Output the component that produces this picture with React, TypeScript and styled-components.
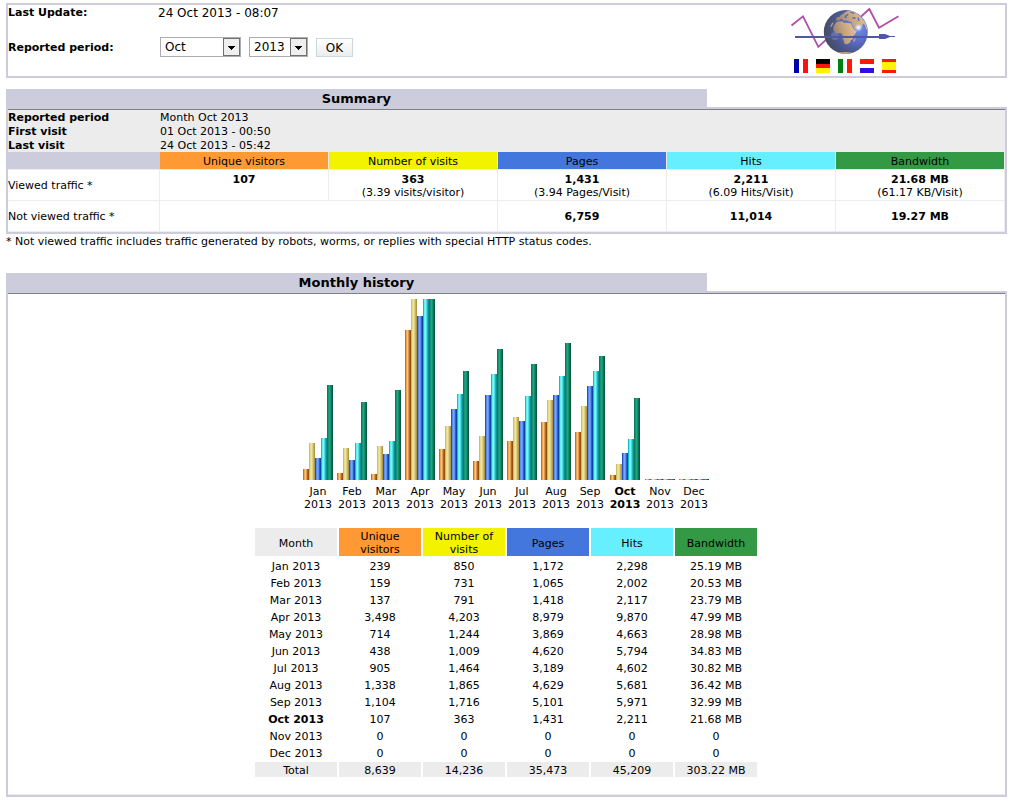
import React from "react";
import styled, { createGlobalStyle } from "styled-components";

const lavender = "#ccccdd";
const pale = "#ececec";

const metrics = [
  { key: "visitors", label: "Unique visitors", color: "#ff9933", bar: ["#c4761d", "#f0a850", "#fac482", "#dd9a50", "#b06a20", "#944f0c"] },
  { key: "visits", label: "Number of visits", color: "#f3f300", bar: ["#cdbf62", "#e6dc8c", "#eee49c", "#ddd084", "#c4b364", "#ac9848"] },
  { key: "pages", label: "Pages", color: "#4477dd", bar: ["#1f55c0", "#5a8cf0", "#7aa4fa", "#6090f0", "#2c60c8", "#1044a4"] },
  { key: "hits", label: "Hits", color: "#66f0ff", bar: ["#10c0c4", "#62f0f2", "#7af8f8", "#50dce0", "#20b4b8", "#0a9094"] },
  { key: "bandwidth", label: "Bandwidth", color: "#339944", bar: ["#0c7c5c", "#149474", "#20a486", "#129070", "#0a7454", "#065a3e"] },
];

const months: { name: string; values: number[] }[] = [
  { name: "Jan", values: [239, 850, 1172, 2298, 25.19] },
  { name: "Feb", values: [159, 731, 1065, 2002, 20.53] },
  { name: "Mar", values: [137, 791, 1418, 2117, 23.79] },
  { name: "Apr", values: [3498, 4203, 8979, 9870, 47.99] },
  { name: "May", values: [714, 1244, 3869, 4663, 28.98] },
  { name: "Jun", values: [438, 1009, 4620, 5794, 34.83] },
  { name: "Jul", values: [905, 1464, 3189, 4602, 30.82] },
  { name: "Aug", values: [1338, 1865, 4629, 5681, 36.42] },
  { name: "Sep", values: [1104, 1716, 5101, 5971, 32.99] },
  { name: "Oct", values: [107, 363, 1431, 2211, 21.68] },
  { name: "Nov", values: [0, 0, 0, 0, 0] },
  { name: "Dec", values: [0, 0, 0, 0, 0] },
];
const currentMonth = "Oct";
const totals = ["8,639", "14,236", "35,473", "45,209", "303.22 MB"];
// Visitors and visits share one scale, pages and hits another.
const maxima = [4203, 4203, 9870, 9870, 47.99];

const barHeight = (value: number, i: number) => Math.floor((value * 180) / maxima[i]) + 1;
const format = (value: number, i: number) =>
  i === 4 && value > 0 ? `${value.toFixed(2)} MB` : value.toLocaleString("en-US");

const GlobalStyle = createGlobalStyle`
  * { box-sizing: border-box; }
  body {
    margin: 0;
    background: #fff;
    color: #000;
    font: 11px/14px Verdana, "DejaVu Sans", sans-serif;
  }
  table { border-collapse: separate; border-spacing: 0; }
  td, th { padding: 0; }
`;

const Page = styled.main`
  padding: 3px 7px 13px 6px;
`;

const Header = styled.header`
  display: flex;
  min-height: 75px;
  border: 2px solid ${lavender};
`;

const Form = styled.form`
  flex: 1;
  display: grid;
  grid-template-columns: 150px 1fr;
  grid-template-rows: 14px 20px;
  row-gap: 18px;
  align-items: center;
`;

const FieldName = styled.label`
  padding-top: 2px;
  font-weight: bold;
`;

const Updated = styled.span`
  padding-top: 2px;
  font-size: 12px;
`;

const Controls = styled.div`
  display: flex;
  align-items: center;
  padding-left: 2px;
`;

const SelectBox = styled.span<{ $width: number }>`
  position: relative;
  width: ${(p) => p.$width}px;
  height: 20px;
  margin-right: 8px;
`;

const Select = styled.select`
  appearance: none;
  width: 100%;
  height: 20px;
  padding: 1px 0 0 4px;
  border: 1px solid #abadb3;
  border-radius: 0;
  background: #fff;
  color: #000;
  font: 12px/17px Verdana, "DejaVu Sans", sans-serif;
`;

const DropMark = styled.svg`
  position: absolute;
  top: 1px;
  right: 1px;
  pointer-events: none;
`;

const SubmitButton = styled.button`
  width: 37px;
  height: 19px;
  padding: 1px 0 0;
  border: 1px solid #ccd7e2;
  background: linear-gradient(#fff, #ececec);
  color: #000;
  font: 12px/16px Verdana, "DejaVu Sans", sans-serif;
`;

const Brand = styled.div`
  width: 219px;
`;

const GlobeArt = styled.svg`
  display: block;
`;

const Flags = styled.nav`
  display: flex;
  gap: 8px;
  padding-left: 8px;
`;

const FlagLink = styled.a`
  display: block;
  width: 14px;
  height: 14px;
`;

const Section = styled.section<{ $gap: number }>`
  margin-top: ${(p) => p.$gap}px;
`;

const Title = styled.h2`
  width: 70%;
  height: 18px;
  margin: 0;
  background: ${lavender};
  font-size: 13px;
  line-height: 19px;
  text-align: center;
`;

const Panel = styled.div`
  border: 2px solid ${lavender};
`;

const SummaryTable = styled.table`
  width: 100%;
  table-layout: fixed;
  border-top: 1px solid #808080;
`;

const InfoRow = styled.tr`
  height: 14px;
  background: ${pale};
  line-height: 12px;
  text-align: left;

  th, td { padding-top: 2px; }
`;

const HeadCell = styled.th<{ $color: string }>`
  height: 18px;
  padding-top: 2px;
  background: ${(p) => p.$color};
  background-clip: padding-box;
  border: 0 solid ${pale};
  border-width: 0 1px 1px 0;
  font-weight: normal;
`;

const CornerCell = styled.td`
  background: ${lavender};
  background-clip: padding-box;
  border-bottom: 1px solid ${pale};
`;

const TrafficRow = styled.tr`
  height: 31px;
  line-height: 13px;
`;

const TrafficName = styled.th`
  border: 0 solid ${pale};
  border-width: 0 1px 1px 0;
  font-weight: normal;
  text-align: left;
`;

const TrafficCell = styled.td`
  padding-top: 3px;
  border: 0 solid ${pale};
  border-width: 0 1px 1px 0;
  text-align: center;
  vertical-align: top;
`;

const TotalCell = styled(TrafficCell)`
  padding-top: 0;
  vertical-align: middle;
  font-weight: bold;
`;

const Note = styled.p`
  margin: 0;
  padding-top: 1px;
`;

const History = styled.div`
  display: flex;
  flex-direction: column;
  align-items: center;
  padding: 5px 1px 15px 0;
  border-top: 1px solid #808080;
  border-bottom: 1px solid ${pale};
`;

const Chart = styled.div`
  display: flex;
  align-items: flex-end;
`;

const ChartMonth = styled.div<{ $current: boolean }>`
  width: ${(p) => (p.$current ? 36 : 34)}px;
  font-weight: ${(p) => (p.$current ? "bold" : "normal")};
  line-height: 13px;
  text-align: center;
`;

const Bars = styled.div`
  display: flex;
  justify-content: center;
  align-items: flex-end;
  height: 181px;
  margin-bottom: 5px;
`;

const Bar = styled.div<{ $shades: string[] }>`
  width: 6px;
  background: linear-gradient(
    90deg,
    ${(p) => p.$shades.map((c, i) => `${c} ${i}px ${i + 1}px`).join(", ")}
  );
`;

const HistoryTable = styled.table`
  width: 506px;
  margin-top: 15px;
  table-layout: fixed;
  border-spacing: 2px;
  line-height: 13px;
  text-align: center;
`;

const HistoryHead = styled.th<{ $color: string }>`
  height: 28px;
  padding: 2px 8px 0;
  background: ${(p) => p.$color};
  font-weight: normal;
`;

const HistoryRow = styled.tr<{ $total?: boolean }>`
  height: 15px;
  background: ${(p) => (p.$total ? pale : "transparent")};

  th, td { padding-top: 2px; }
`;

const RowName = styled.th<{ $current?: boolean }>`
  font-weight: ${(p) => (p.$current ? "bold" : "normal")};
`;

function Arrow() {
  return (
    <DropMark width="17" height="18" viewBox="0 0 17 18" aria-hidden="true" shapeRendering="crispEdges">
      <rect x="0.5" y="0.5" width="16" height="17" fill="#efefef" stroke="#707070" />
      <path d="M5 8h7v1h-1v1h-1v1h-1v1h-1v-1h-1v-1h-1v-1h-1z" fill="#000" />
    </DropMark>
  );
}

function Globe() {
  return (
    <GlobeArt width="120" height="54" viewBox="0 0 120 54" role="img" aria-label="Globe with trend line">
      <defs>
        <radialGradient id="sea" cx="0.76" cy="0.4" r="0.75">
          <stop offset="0" stopColor="#7890e4" />
          <stop offset="0.4" stopColor="#5a6ecc" />
          <stop offset="0.7" stopColor="#4c5890" />
          <stop offset="1" stopColor="#464c64" />
        </radialGradient>
        <linearGradient id="land" x1="0" y1="0.6" x2="1" y2="0.3">
          <stop offset="0" stopColor="#94806c" />
          <stop offset="0.5" stopColor="#c8a680" />
          <stop offset="1" stopColor="#e4c498" />
        </linearGradient>
        <radialGradient id="shine">
          <stop offset="0" stopColor="#fff" />
          <stop offset="0.4" stopColor="#e4eeff" stopOpacity="0.8" />
          <stop offset="1" stopColor="#a0b8f8" stopOpacity="0" />
        </radialGradient>
        <clipPath id="disc">
          <circle cx="59.8" cy="27" r="22" />
        </clipPath>
      </defs>
      <path
        d="M5.5 20.5 17 11.3 32.3 41.8 42 33M74 12.5 83.3 4 93 22.7 112.5 11.3"
        fill="none"
        stroke="#b44cae"
        strokeWidth="1.8"
      />
      <circle cx="59.8" cy="27" r="22" fill="url(#sea)" />
      <g clipPath="url(#disc)">
        <path
          fill="url(#land)"
          d="M50 17.5 52 16.5 56 16.3 58 17.8 62 18 65 18.5 66.5 22 69 25.5 71 25.8 69.5 28.5 67 31 66.8 34 64.5 35.5 64 37.5 61 39.2 58.5 39 57.5 35 56 32.5 56.5 29.5 55 28.2 50 28.2 47.2 25.5 47.5 21.5z"
        />
        <path
          fill="url(#land)"
          d="M50 15.5 50.5 12.5 53.5 12 55 10 57 9 60 6.5 65 5.5 71 8 76 13 79.5 18 81.5 25 80 24 79 20 77 18.5 75.5 23 73.5 21.5 71.5 19 72 22.5 69 24.5 66.5 20 65.5 17 61.5 16 60 15 58 16 55.5 13.8 53 15.5z"
        />
        <path fill="#5c70c0" d="M59 10.5 62 8.5 62.5 10 60.5 11.5 61 13 58.5 13zM66 12.5 69 12 70 13.5 67 14zM71.5 12.5 73 12.5 73.5 16 72 16zM64 6.5 69 8 68 9 64.5 8z" />
        <path fill="#c8a680" d="M67.5 34.5 69.5 33 69.3 35.5 67.5 37.5zM44 22.5 46 18 47.5 17.5 46 21zM52 47.5 59 47 66 47.5 62 50 55 50z" />
        <circle cx="72.5" cy="22.5" r="4.5" fill="url(#shine)" />
        <circle cx="49" cy="31" r="4" fill="#8c98c8" fillOpacity="0.4" />
      </g>
      <path d="M9 31h84v-2h6l5 2h5v1h-5l-5 2h-6v-1H9z" fill="#5058a0" />
    </GlobeArt>
  );
}

const thirds = [0, 5, 9, 14];
const broadMiddle = [0, 3, 11, 14];

function Flag({ name, colors, vertical, stops = thirds }: {
  name: string;
  colors: string[];
  vertical?: boolean;
  stops?: number[];
}) {
  return (
    <FlagLink href="#" aria-label={name} title={name}>
      <svg width="14" height="14" viewBox="0 0 14 14" shapeRendering="crispEdges">
        {colors.map((c, i) =>
          vertical ? (
            <rect key={i} x={stops[i]} width={stops[i + 1] - stops[i]} height="14" fill={c} />
          ) : (
            <rect key={i} y={stops[i]} width="14" height={stops[i + 1] - stops[i]} fill={c} />
          )
        )}
      </svg>
    </FlagLink>
  );
}

export default function App() {
  return (
    <>
      <GlobalStyle />
      <Page>
        <Header>
          <Form onSubmit={(e) => e.preventDefault()}>
            <FieldName as="span">Last Update:</FieldName>
            <Updated>24 Oct 2013 - 08:07</Updated>
            <FieldName htmlFor="month">Reported period:</FieldName>
            <Controls>
              <SelectBox $width={81}>
                <Select id="month" defaultValue="Oct">
                  {months.map((m) => (
                    <option key={m.name}>{m.name}</option>
                  ))}
                </Select>
                <Arrow />
              </SelectBox>
              <SelectBox $width={59}>
                <Select aria-label="Year" defaultValue="2013">
                  <option>2012</option>
                  <option>2013</option>
                </Select>
                <Arrow />
              </SelectBox>
              <SubmitButton type="submit">OK</SubmitButton>
            </Controls>
          </Form>
          <Brand>
            <Globe />
            <Flags aria-label="Language">
              <Flag name="Français" vertical colors={["#0000b0", "#fff", "#ff1010"]} />
              <Flag name="Deutsch" colors={["#080000", "#ff1808", "#fff400"]} />
              <Flag name="Italiano" vertical colors={["#008010", "#fff", "#ff1808"]} />
              <Flag name="Nederlands" colors={["#ff1808", "#fff", "#3010e0"]} />
              <Flag name="Español" colors={["#ff1808", "#fff400", "#ff1808"]} stops={broadMiddle} />
            </Flags>
          </Brand>
        </Header>

        <Section $gap={11}>
          <Title>Summary</Title>
          <Panel>
            <SummaryTable>
              <colgroup>
                <col width="152" />
                <col />
                <col />
                <col />
                <col />
                <col />
              </colgroup>
              <tbody>
                <InfoRow>
                  <th>Reported period</th>
                  <td colSpan={5}>Month Oct 2013</td>
                </InfoRow>
                <InfoRow>
                  <th>First visit</th>
                  <td colSpan={5}>01 Oct 2013 - 00:50</td>
                </InfoRow>
                <InfoRow>
                  <th>Last visit</th>
                  <td colSpan={5}>24 Oct 2013 - 05:42</td>
                </InfoRow>
                <tr>
                  <CornerCell />
                  {metrics.map((m) => (
                    <HeadCell key={m.key} $color={m.color} scope="col">
                      {m.label}
                    </HeadCell>
                  ))}
                </tr>
                <TrafficRow>
                  <TrafficName scope="row">Viewed traffic *</TrafficName>
                  <TrafficCell><b>107</b></TrafficCell>
                  <TrafficCell><b>363</b><br />(3.39 visits/visitor)</TrafficCell>
                  <TrafficCell><b>1,431</b><br />(3.94 Pages/Visit)</TrafficCell>
                  <TrafficCell><b>2,211</b><br />(6.09 Hits/Visit)</TrafficCell>
                  <TrafficCell><b>21.68 MB</b><br />(61.17 KB/Visit)</TrafficCell>
                </TrafficRow>
                <TrafficRow>
                  <TrafficName scope="row">Not viewed traffic *</TrafficName>
                  <TotalCell colSpan={2} />
                  <TotalCell>6,759</TotalCell>
                  <TotalCell>11,014</TotalCell>
                  <TotalCell>19.27 MB</TotalCell>
                </TrafficRow>
              </tbody>
            </SummaryTable>
          </Panel>
          <Note>* Not viewed traffic includes traffic generated by robots, worms, or replies with special HTTP status codes.</Note>
        </Section>

        <Section $gap={24}>
          <Title>Monthly history</Title>
          <Panel>
            <History>
              <Chart>
                {months.map((m) => (
                  <ChartMonth key={m.name} $current={m.name === currentMonth}>
                    <Bars>
                      {m.values.map((v, i) => (
                        <Bar key={i} $shades={metrics[i].bar} style={{ height: barHeight(v, i) }} />
                      ))}
                    </Bars>
                    {m.name}
                    <br />
                    2013
                  </ChartMonth>
                ))}
              </Chart>
              <HistoryTable>
                <thead>
                  <tr>
                    <HistoryHead $color={pale} scope="col">Month</HistoryHead>
                    {metrics.map((m) => (
                      <HistoryHead key={m.key} $color={m.color} scope="col">{m.label}</HistoryHead>
                    ))}
                  </tr>
                </thead>
                <tbody>
                  {months.map((m) => (
                    <HistoryRow key={m.name}>
                      <RowName scope="row" $current={m.name === currentMonth}>{m.name} 2013</RowName>
                      {m.values.map((v, i) => (
                        <td key={i}>{format(v, i)}</td>
                      ))}
                    </HistoryRow>
                  ))}
                  <HistoryRow $total>
                    <RowName scope="row">Total</RowName>
                    {totals.map((t) => (
                      <td key={t}>{t}</td>
                    ))}
                  </HistoryRow>
                </tbody>
              </HistoryTable>
            </History>
          </Panel>
        </Section>
      </Page>
    </>
  );
}
